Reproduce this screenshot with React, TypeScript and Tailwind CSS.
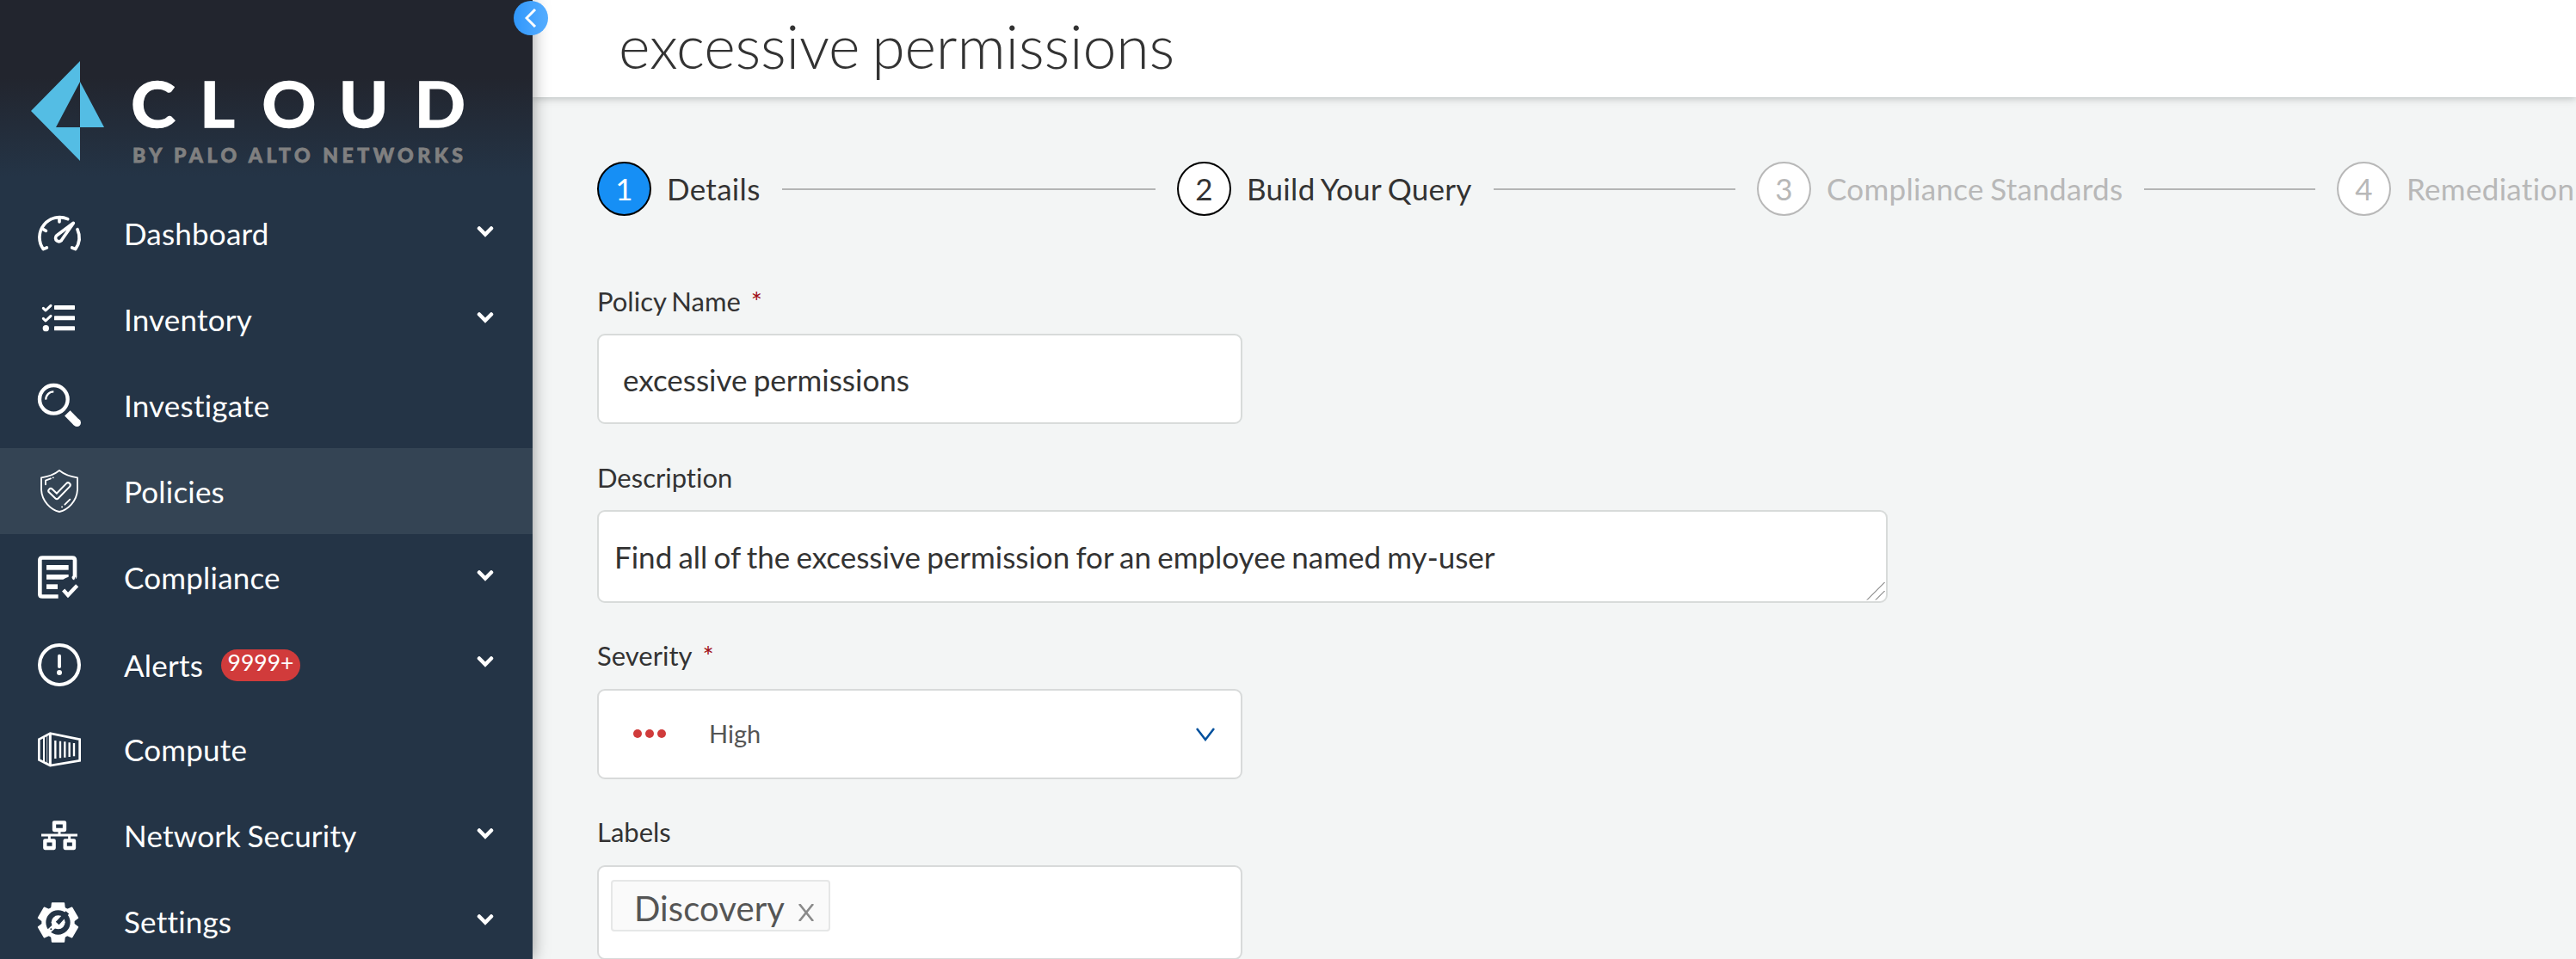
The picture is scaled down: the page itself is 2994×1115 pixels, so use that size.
import type { ReactNode } from "react";

function Glyph({ children }: { children: ReactNode }) {
  return (
    <svg
      viewBox="0 0 150 150"
      className="h-[50px] w-[50px] shrink-0 overflow-visible"
      fill="none"
      stroke="#fff"
      strokeLinecap="round"
      strokeLinejoin="round"
    >
      {children}
    </svg>
  );
}

const DashboardIcon = () => (
  <Glyph>
    <g strokeWidth="11">
      <path d="M31 126 19 131A70 70 0 0 1 104 26" />
      <path d="M138 62A70 70 0 0 1 131 131L119 126" />
      <path d="M75 22V36M19 62 28 67" />
      <path d="M124 40 85 96A12 12 0 1 1 66 83Z" />
    </g>
  </Glyph>
);

const InventoryIcon = () => (
  <Glyph>
    <path d="M19 37 27 45 45 28M19 73 27 81 45 64" strokeWidth="9" />
    <circle cx="28" cy="107" r="11" fill="#fff" stroke="none" />
    <g fill="#fff" stroke="none">
      <rect x="57" y="27" width="72" height="15" rx="2" />
      <rect x="57" y="64" width="72" height="15" rx="2" />
      <rect x="57" y="100" width="72" height="15" rx="2" />
    </g>
  </Glyph>
);

const InvestigateIcon = () => (
  <Glyph>
    <circle cx="55" cy="55" r="49" strokeWidth="13" />
    <path d="M28 56A27 27 0 0 1 55 28" strokeWidth="7" strokeLinecap="butt" />
    <path d="M103 103 136 137" strokeWidth="27" strokeLinecap="butt" />
    <circle cx="136.500" cy="136.500" r="13.500" fill="#fff" stroke="none" />
  </Glyph>
);

const PoliciesIcon = () => (
  <Glyph>
    <path
      d="M75 3C60 15 35 25 12 28V70C14 110 45 140 75 147C105 140 136 110 138 70V28C115 25 90 15 75 3Z"
      strokeWidth="5.500"
    />
    <path d="M45 74 66 94 105 54" strokeWidth="22" />
    <path d="M45 74 66 94 105 54" strokeWidth="10" stroke="#344454" />
    <path d="M27 52V38L45 31M53 28h.5M112 104 94 122M84 130h.5" strokeWidth="5.500" />
  </Glyph>
);

const ComplianceIcon = () => (
  <Glyph>
    <path
      d="M129 79Q122 76 129 75V16Q129 7.500 120 7.500H16Q7 7.500 7 16V134Q7 142.500 16 142.500H71"
      strokeWidth="14"
      strokeLinecap="butt"
    />
    <g fill="#fff" stroke="none">
      <path d="M30 33H107V50H30Z" />
      <path d="M30 66H107V74Q97 77 88 83H30Z" />
      <path d="M30 100H69V117H30Z" />
    </g>
    <path d="M89 120 105 138 137 104" strokeWidth="13" strokeLinecap="butt" strokeLinejoin="miter" />
  </Glyph>
);

const AlertsIcon = () => (
  <Glyph>
    <circle cx="75" cy="75" r="69" strokeWidth="12" />
    <path d="M75 44V81" strokeWidth="12" />
    <circle cx="75" cy="102" r="9" fill="#fff" stroke="none" />
  </Glyph>
);

const ComputeIcon = () => (
  <Glyph>
    <g strokeLinecap="butt" strokeLinejoin="miter">
      <path d="M4 41 43 20 146 41V115L43 132 4 112Z" strokeWidth="8" />
      <path d="M43 20V132" strokeWidth="9" />
      <path d="M21 32V121" strokeWidth="6" />
      <path d="M32 27V126" strokeWidth="3" opacity=".7" />
      <path d="M61 45V108M78 47V106M94 49V104M110 52V102M126 54V100" strokeWidth="7" />
    </g>
  </Glyph>
);

const NetworkIcon = () => (
  <Glyph>
    <g strokeWidth="13">
      <rect x="57" y="31" width="36" height="26" />
      <rect x="25" y="94" width="31" height="26" />
      <rect x="95" y="94" width="31" height="26" />
    </g>
    <path d="M12 75H138M75 60V75M40 75V90M110 75V90" strokeWidth="9" strokeLinecap="butt" />
  </Glyph>
);

const SettingsIcon = () => (
  <Glyph>
    <circle cx="70.500" cy="79.500" r="50" strokeWidth="15" />
    {[0, 60, 120, 180, 240, 300].map((a) => (
      <path
        key={a}
        d="M50 12H91L93 30H48Z"
        fill="#fff"
        strokeWidth="5"
        transform={`rotate(${a} 70.500 79.500)`}
      />
    ))}
    <path d="M62 88 36 112" strokeWidth="15" />
    <circle cx="71" cy="79" r="24" fill="#fff" stroke="none" />
    <path d="M73 77 98 50" stroke="#243446" strokeWidth="15" strokeLinecap="square" />
    <circle cx="46" cy="103" r="3" fill="#243446" stroke="none" />
  </Glyph>
);

type NavItem = {
  label: string;
  icon: () => ReactNode;
  expandable?: boolean;
  active?: boolean;
  badge?: string;
};

const navItems: NavItem[] = [
  { label: "Dashboard", icon: DashboardIcon, expandable: true },
  { label: "Inventory", icon: InventoryIcon, expandable: true },
  { label: "Investigate", icon: InvestigateIcon },
  { label: "Policies", icon: PoliciesIcon, active: true },
  { label: "Compliance", icon: ComplianceIcon, expandable: true },
  { label: "Alerts", icon: AlertsIcon, expandable: true, badge: "9999+" },
  { label: "Compute", icon: ComputeIcon },
  { label: "Network Security", icon: NetworkIcon, expandable: true },
  { label: "Settings", icon: SettingsIcon, expandable: true },
];

function Logo() {
  return (
    <svg viewBox="0 0 619 221" className="h-[221px] w-[619px] shrink-0 [word-spacing:0px]">
      <path d="M93 71V95L65 148H93V187L36 129Z" fill="#54bde4" />
      <path d="M93 95 121 148H93Z" fill="#54bde4" />
      <text
        transform="scale(1.08 1)"
        x="141 215 282 364.500 446"
        y="148.500"
        fill="#fff"
        stroke="#fff"
        strokeWidth="1.600"
        className="font-['Lato'] text-[72px] font-bold"
      >
        CLOUD
      </text>
      <text
        x="154"
        y="188.500"
        fill="#808080"
        stroke="#808080"
        strokeWidth="0.800"
        textLength="384"
        lengthAdjust="spacing"
        className="font-['Lato'] text-[23px] font-black"
      >
        BY PALO ALTO NETWORKS
      </text>
    </svg>
  );
}

function NavRow({ item }: { item: NavItem }) {
  const Icon = item.icon;
  return (
    <li
      className={`flex h-[100px] items-center pl-[44px] pr-[45px] ${item.active ? "bg-[#344454]" : ""}`}
    >
      <div className={`flex items-center ${item.badge ? "pt-1" : ""}`}>
        <Icon />
        <span className="ml-[50px] text-[35px] leading-[42px] tracking-[0.2px] text-white">{item.label}</span>
        {item.badge && (
          <span className="ml-[21px] flex h-[37px] w-[92px] justify-center rounded-full bg-[#d13b3b] text-[26.500px] leading-[31px] text-white">
            {item.badge}
          </span>
        )}
      </div>
      {item.expandable && (
        <svg
          viewBox="0 0 20 14"
          className="mb-[4px] ml-auto h-[14px] w-[20px]"
          fill="none"
          stroke="#fff"
          strokeWidth="4.500"
          strokeLinecap="round"
        >
          <path d="M3 3.500 10 10.500 17 3.500" />
        </svg>
      )}
    </li>
  );
}

function Sidebar() {
  return (
    <aside className="relative z-20 flex h-full w-[619px] shrink-0 flex-col bg-[#243446] bg-[linear-gradient(180deg,#22252e_0px,#22252e_90px,#243446_205px)] shadow-[0_0_18px_rgba(0,0,0,0.4)]">
      <Logo />
      <ul className="flex flex-col">
        {navItems.map((item) => (
          <NavRow key={item.label} item={item} />
        ))}
      </ul>
      <button className="absolute left-[597px] top-[1px] flex h-[40px] w-[40px] items-center justify-center rounded-full bg-gradient-to-r from-[#2f97fb] to-[#55adff]">
        <svg viewBox="0 0 14 22" className="h-[22px] w-[14px]" fill="none" stroke="#fff" strokeWidth="3">
          <path d="M12 1 2 11 12 21" />
        </svg>
      </button>
    </aside>
  );
}

const steps = [
  { n: 1, label: "Details", circle: "bg-[#168ff5] border-black text-white", text: "text-[#333]" },
  { n: 2, label: "Build Your Query", circle: "bg-white border-black text-[#333]", text: "text-[#333]" },
  {
    n: 3,
    label: "Compliance Standards",
    circle: "bg-white border-[#b8b8b8] text-[#b8b8b8]",
    text: "text-[#b8b8b8]",
  },
  { n: 4, label: "Remediation", circle: "bg-white border-[#b8b8b8] text-[#b8b8b8]", text: "text-[#b8b8b8]" },
];

function Stepper() {
  return (
    <div className="flex">
      {steps.map((s, i) => (
        <div key={s.n} className="flex h-[63px] w-[674px] shrink-0 items-center text-[35px] tracking-[0.3px]">
          <span
            className={`flex h-[63px] w-[63px] shrink-0 items-center justify-center rounded-full border-2 pb-[2px] leading-[42px] ${s.circle}`}
          >
            {s.n}
          </span>
          <span className={`ml-[18px] shrink-0 pb-[2px] leading-[42px] ${s.text}`}>{s.label}</span>
          {i < steps.length - 1 && <span className="ml-[25px] mr-[25px] mt-px h-[2px] grow bg-[#b4b5b5]" />}
        </div>
      ))}
    </div>
  );
}

function Label({ children, required }: { children: string; required?: boolean }) {
  return (
    <div className="flex text-[31px] leading-[38px] text-[#333]">
      {children}
      {required && <span className="ml-[12px] text-[31px] leading-[38px] text-[#a00d16]">*</span>}
    </div>
  );
}

export default function App() {
  return (
    <div className="flex h-[1115px] w-[2994px] overflow-hidden bg-[#f3f5f5] font-['Lato',sans-serif] [font-variant-ligatures:none] [word-spacing:-1.8px]">
      <Sidebar />
      <main className="flex min-w-0 grow flex-col">
        <header className="relative z-10 h-[113px] shrink-0 bg-white pl-[100px] pt-[11px] shadow-[0_1px_9px_rgba(60,70,68,0.35)]">
          <h1 className="text-[70px] font-light leading-[84px] tracking-[-0.2px] text-[#333] [word-spacing:-5px]">
            excessive permissions
          </h1>
        </header>
        <div className="flex flex-col pl-[75px] pt-[75px]">
          <Stepper />

          <div className="mt-[80px]">
            <Label required>Policy Name</Label>
            <div className="mt-[19px] flex h-[105px] w-[750px] items-center rounded-[9px] border-2 border-[#d8dbda] bg-white pl-[28px] pt-px text-[35px] leading-[42px] text-[#333]">
              excessive permissions
            </div>
          </div>

          <div className="mt-[43px]">
            <Label>Description</Label>
            <div className="relative mt-[19px] flex h-[108px] w-[1500px] items-center rounded-[9px] border-2 border-[#d8dbda] bg-white pl-[18px] text-[35px] leading-[42px] text-[#333]">
              Find all of the excessive permission for an employee named my-user
              <svg
                viewBox="0 0 22 22"
                className="absolute bottom-[1px] right-[1px] h-[22px] w-[22px]"
                stroke="#555"
                strokeWidth="1"
              >
                <path d="M1 21.500 21.500 1M11 21.500 21.500 11" />
              </svg>
            </div>
          </div>

          <div className="mt-[42px]">
            <Label required>Severity</Label>
            <div className="mt-[20px] flex h-[105px] w-[750px] items-center rounded-[9px] border-2 border-[#d8dada] bg-white pl-[40px] pr-[30px]">
              <span className="flex gap-[4px] pb-px">
                <span className="h-[10px] w-[10px] rounded-full bg-[#d03b3b]" />
                <span className="h-[10px] w-[10px] rounded-full bg-[#d03b3b]" />
                <span className="h-[10px] w-[10px] rounded-full bg-[#d03b3b]" />
              </span>
              <span className="ml-[50px] pb-[2px] text-[29px] leading-[36px] text-[#555]">High</span>
              <svg
                viewBox="0 0 22 16"
                className="ml-auto h-[16px] w-[22px]"
                fill="none"
                stroke="#00509d"
                strokeWidth="2.500"
              >
                <path d="M1 1 11 14 21 1" />
              </svg>
            </div>
          </div>

          <div className="mt-[42px]">
            <Label>Labels</Label>
            <div className="mt-[20px] h-[110px] w-[750px] rounded-[9px] border-2 border-[#d8dada] bg-white pl-[14px] pt-[15px]">
              <div className="flex h-[60px] w-[255px] items-center rounded-[4px] border-2 border-[#e6e7e7] bg-[#fafafa] pl-[25px] pt-[5px]">
                <span className="text-[40px] leading-[48px] tracking-[0.1px] text-[#555]">Discovery</span>
                <svg
                  viewBox="0 0 20 20"
                  className="ml-[15px] mt-[10px] h-[20px] w-[20px]"
                  stroke="#8a8a8a"
                  strokeWidth="2.600"
                >
                  <path d="M2 0 18 20M18 0 2 20" />
                </svg>
              </div>
            </div>
          </div>
        </div>
      </main>
    </div>
  );
}
